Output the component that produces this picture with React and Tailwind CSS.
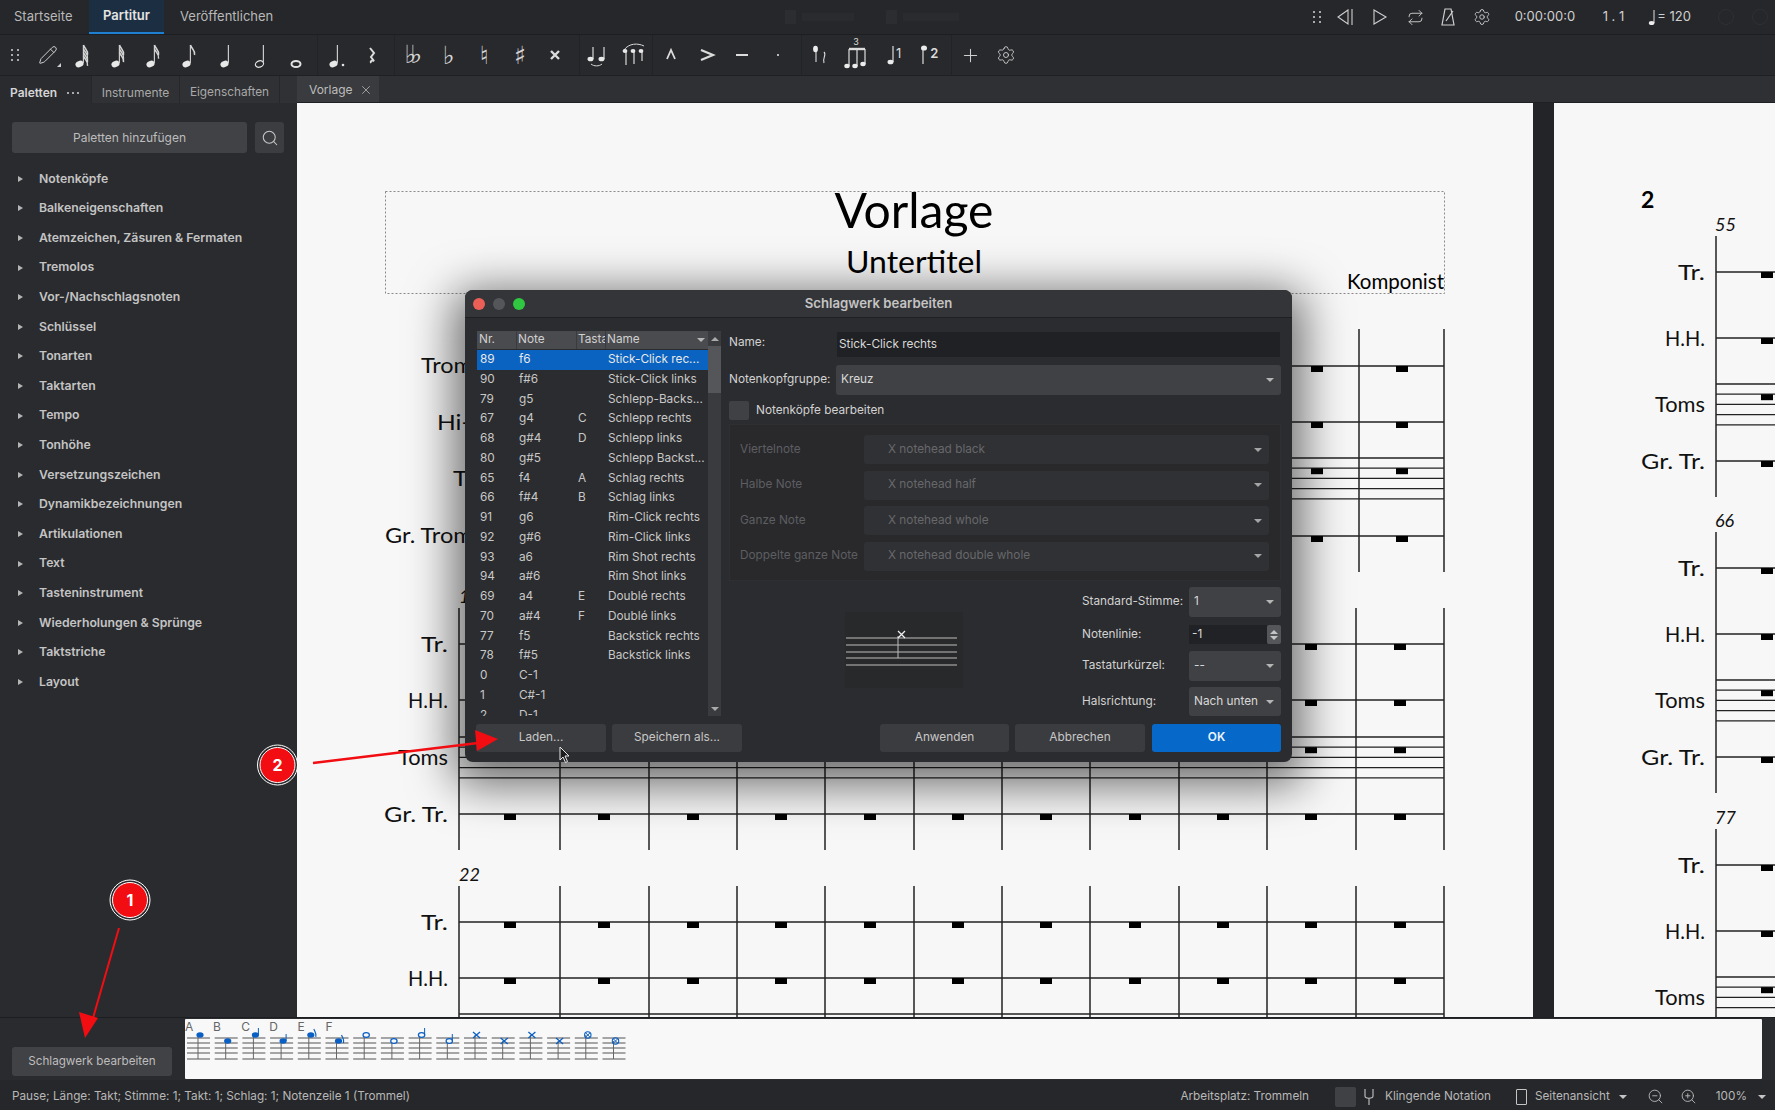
import React from 'react';
import { Search, X, Settings, Plus, ZoomIn, ZoomOut, Pencil, Repeat } from 'lucide-react';

const palettes = [
  'Notenköpfe', 'Balkeneigenschaften', 'Atemzeichen, Zäsuren & Fermaten', 'Tremolos', 'Vor-/Nachschlagsnoten',
  'Schlüssel', 'Tonarten', 'Taktarten', 'Tempo', 'Tonhöhe', 'Versetzungszeichen', 'Dynamikbezeichnungen',
  'Artikulationen', 'Text', 'Tasteninstrument', 'Wiederholungen & Sprünge', 'Taktstriche', 'Layout',
];

const drumRows = [
  ['89', 'f6', '', 'Stick-Click rec...'],
  ['90', 'f#6', '', 'Stick-Click links'],
  ['79', 'g5', '', 'Schlepp-Backs...'],
  ['67', 'g4', 'C', 'Schlepp rechts'],
  ['68', 'g#4', 'D', 'Schlepp links'],
  ['80', 'g#5', '', 'Schlepp Backst...'],
  ['65', 'f4', 'A', 'Schlag rechts'],
  ['66', 'f#4', 'B', 'Schlag links'],
  ['91', 'g6', '', 'Rim-Click rechts'],
  ['92', 'g#6', '', 'Rim-Click links'],
  ['93', 'a6', '', 'Rim Shot rechts'],
  ['94', 'a#6', '', 'Rim Shot links'],
  ['69', 'a4', 'E', 'Doublé rechts'],
  ['70', 'a#4', 'F', 'Doublé links'],
  ['77', 'f5', '', 'Backstick rechts'],
  ['78', 'f#5', '', 'Backstick links'],
  ['0', 'C-1', '', ''],
  ['1', 'C#-1', '', ''],
  ['2', 'D-1', '', ''],
];

const noteheadRows = [
  ['Viertelnote', 'X notehead black'],
  ['Halbe Note', 'X notehead half'],
  ['Ganze Note', 'X notehead whole'],
  ['Doppelte ganze Note', 'X notehead double whole'],
];

const Caret = ({ className = 'border-t-[#b5b5b5]' }) => (
  <span className={`w-0 h-0 border-l-[4px] border-r-[4px] border-t-[4px] border-l-transparent border-r-transparent ${className}`} />
);

// kleine Notensymbole der Werkzeugleiste
const Note = ({ flags = 0, head = 'black', dot = false, className = '' }) => (
  <svg className={className} width="24" height="30" viewBox="0 0 24 30" fill="none">
    {head === 'whole' ? (
      <ellipse cx="12" cy="24" rx="4.5" ry="3" fill="none" stroke="#e2e2e2" strokeWidth="2" />
    ) : (
      <>
        <ellipse cx="8.5" cy="24" rx="4.2" ry="3.1" transform="rotate(-22 8.5 24)"
          fill={head === 'black' ? '#e8e8e8' : 'none'} stroke="#e2e2e2" strokeWidth={head === 'black' ? 0 : 1.2} />
        <path d="M12.4 23V5" stroke="#c9c9c9" strokeWidth="1.2" />
      </>
    )}
    {[...Array(flags)].map((_, i) => (
      <path key={i} d={`M12.5 ${5 + i * 3.6}C13.5 ${9 + i * 3.6} 17.5 ${10 + i * 3.6} 16.5 ${15 + i * 3.6}`} stroke="#d5d5d5" strokeWidth="1.5" />
    ))}
    {dot && <circle cx="18" cy="25" r="1.3" fill="#e2e2e2" />}
  </svg>
);

const Glyph = ({ children, size = 'text-[25px]' }) => (
  <span className={`${size} leading-none text-[#d5d5d5] font-['DejaVu_Sans',sans-serif]`}>{children}</span>
);

const Sym = ({ d, w = 1.8 }) => (
  <svg width="20" height="20" viewBox="0 0 20 20" fill="none" stroke="#dcdcdc" strokeWidth={w}>
    <path d={d} />
  </svg>
);

const Cell = ({ children }) => (
  <div className="w-[35.5px] h-full flex items-center justify-center">{children}</div>
);

const Sep = ({ className = 'ml-[1px]' }) => <div className={`w-px mr-[1px] h-full bg-[#222326] ${className}`} />;

const Dots = () => (
  <svg width="10" height="16" viewBox="0 0 10 16" fill="#a9a9a9">
    {[2, 7, 12].map((y) => (
      <g key={y}>
        <rect x="1" y={y} width="2" height="2" />
        <rect x="7" y={y} width="2" height="2" />
      </g>
    ))}
  </svg>
);

const Toolbar = () => (
  <div className="h-[41px] bg-[#28292c] border-b border-[#1f2023] flex items-center shrink-0">
    <div className="w-[30px] flex justify-center"><Dots /></div>
    <Cell>
      <div className="relative">
        <Pencil size={20} strokeWidth={1.2} className="text-[#cfcfcf]" />
        <span className="absolute -right-[3px] -bottom-[2px] w-0 h-0 border-l-[4px] border-t-[4px] border-l-transparent border-t-transparent border-r-[4px] border-r-[#cfcfcf]" />
      </div>
    </Cell>
    <Cell><Note flags={4} /></Cell>
    <Cell><Note flags={3} /></Cell>
    <Cell><Note flags={2} /></Cell>
    <Cell><Note flags={1} /></Cell>
    <Cell><Note className="ml-[5px]" /></Cell>
    <Cell><Note head="half" className="ml-[4px]" /></Cell>
    <Cell><Note head="whole" /></Cell>
    <Sep className="ml-[3px]" />
    <Cell><Note dot /></Cell>
    <Cell><Sym d="M8 3l4 5-3 4 3 4c-2-1-4 0-3 2" w={2} /></Cell>
    <Sep className="ml-[3.5px]" />
    <Cell><span className="tracking-[-6px] pr-[6px]"><Glyph>♭♭</Glyph></span></Cell>
    <Cell><Glyph>♭</Glyph></Cell>
    <Cell><Glyph>♮</Glyph></Cell>
    <Cell><Glyph>♯</Glyph></Cell>
    <Cell><Sym d="M6 6l8 8M14 6l-8 8" w={2.4} /></Cell>
    <Sep className="ml-[5.5px]" />
    <Cell>
      <svg width="26" height="26" viewBox="0 0 26 26" fill="none" stroke="#d8d8d8">
        <path d="M8 17V5M19 17V5" strokeWidth="1.2" />
        <ellipse cx="5.5" cy="17" rx="3" ry="2.3" fill="#e8e8e8" stroke="none" />
        <ellipse cx="16.5" cy="17" rx="3" ry="2.3" fill="#e8e8e8" stroke="none" />
        <path d="M6 22c3 2.5 8 2.5 11 0" strokeWidth="1" />
      </svg>
    </Cell>
    <Cell>
      <svg width="28" height="28" viewBox="0 0 28 28" fill="none" stroke="#d8d8d8">
        <path d="M4 9c5-7 14-7 20-4" strokeWidth="1" />
        <path d="M6 10v14M14 9v14M22 9v11" strokeWidth="1.2" />
        <ellipse cx="5" cy="10" rx="2.4" ry="2" fill="#e8e8e8" stroke="none" />
        <ellipse cx="13" cy="10" rx="2.4" ry="2" fill="#e8e8e8" stroke="none" />
        <ellipse cx="21" cy="10" rx="2.4" ry="2" fill="#e8e8e8" stroke="none" />
      </svg>
    </Cell>
    <Sep className="ml-0" />
    <Cell><Sym d="M6 14l4-9 4 9" /></Cell>
    <Cell><Sym d="M4 5l12 5-12 5" w={2.2} /></Cell>
    <Cell><Sym d="M4 10h12" w={2} /></Cell>
    <Cell><Sym d="M9.2 10h1.6" w={2} /></Cell>
    <Sep className="ml-[5.5px]" />
    <Cell>
      <svg width="24" height="24" viewBox="0 0 24 24" fill="none" stroke="#dcdcdc">
        <path d="M7 6v13" strokeWidth="1.1" />
        <ellipse cx="6.5" cy="6" rx="2.4" ry="3.2" fill="#ececec" stroke="none" />
        <path d="M15 9c3 3-2 6 0 11" strokeWidth="1.1" />
      </svg>
    </Cell>
    <Cell>
      <div className="relative">
        <svg width="28" height="30" viewBox="0 0 28 30" fill="none" stroke="#dcdcdc">
          <path d="M7 9v17M15 9v17M23 9v15" strokeWidth="1.2" />
          <path d="M7 9h16" strokeWidth="2.4" />
          <ellipse cx="5" cy="26" rx="2.7" ry="2.2" fill="#ececec" stroke="none" />
          <ellipse cx="13" cy="26" rx="2.7" ry="2.2" fill="#ececec" stroke="none" />
          <ellipse cx="21" cy="24" rx="2.7" ry="2.2" fill="#ececec" stroke="none" />
        </svg>
        <span className="absolute left-[11px] -top-[3px] text-[9px] leading-none text-[#dcdcdc]">3</span>
      </div>
    </Cell>
    <div className="w-[2px]" />
    <Cell>
      <div className="flex items-start">
        <svg width="10" height="22" viewBox="0 0 10 22" fill="none" stroke="#dcdcdc"><path d="M7 2v16" strokeWidth="1.2" /><ellipse cx="4.5" cy="18" rx="3" ry="2.3" fill="#ececec" stroke="none" /></svg>
        <span className="text-[13px] leading-[18px] text-[#dcdcdc]">1</span>
      </div>
    </Cell>
    <Cell>
      <div className="flex items-start">
        <svg width="10" height="22" viewBox="0 0 10 22" fill="none" stroke="#dcdcdc"><path d="M3 4v16" strokeWidth="1.2" /><ellipse cx="4" cy="4" rx="3" ry="2.6" fill="#ececec" stroke="none" /></svg>
        <span className="text-[13px] leading-[18px] font-semibold text-[#dcdcdc]">2</span>
      </div>
    </Cell>
    <Sep className="ml-[4px]" />
    <Cell><Plus size={21} strokeWidth={1.2} className="text-[#cfcfcf]" /></Cell>
    <Cell><Settings size={20} strokeWidth={1.1} className="text-[#cfcfcf]" /></Cell>
  </div>
);

const TopBar = () => (
  <div className="h-[35px] bg-[#26272a] border-b border-[#1d1e21] flex items-stretch shrink-0 text-[13px]">
    <div className="w-[89px] flex items-center pl-[14px] text-[#b9b9b9]">Startseite</div>
    <div className="w-[75px] flex items-center justify-center font-semibold text-[#e4e4e4] bg-[#1c2f42] border-b-2 border-[#1f7fd1]">Partitur</div>
    <div className="pl-[16px] flex items-center text-[#b9b9b9]">Veröffentlichen</div>
    <div className="flex items-center ml-[512px] gap-[6px]">
      <span className="w-[11px] h-[14px] bg-[#2c2d31]" />
      <span className="w-[52px] h-[8px] bg-[#2a2b2e]" />
      <span className="w-[11px] h-[14px] ml-[26px] bg-[#2c2d31]" />
      <span className="w-[56px] h-[8px] bg-[#2a2b2e]" />
    </div>
    <div className="flex items-center ml-auto text-[#cfcfcf]">
      <Dots />
      <svg className="ml-[12px]" width="22" height="20" viewBox="0 0 22 20" fill="none" stroke="#cfcfcf" strokeWidth="1.1">
        <path d="M14 3L4 10l10 7zM18 2v16" />
      </svg>
      <svg className="ml-[15px]" width="18" height="20" viewBox="0 0 18 20" fill="none" stroke="#cfcfcf" strokeWidth="1.1">
        <path d="M3 3l12 7-12 7z" />
      </svg>
      <Repeat size={17} strokeWidth={1.3} className="ml-[18px]" />
      <svg className="ml-[15px]" width="18" height="20" viewBox="0 0 18 20" fill="none" stroke="#cfcfcf" strokeWidth="1.2">
        <path d="M6 2h6l3 16H3zM7 14l7-10" />
      </svg>
      <Settings size={18} strokeWidth={1.2} className="ml-[16px]" />
      <span className="ml-[24px] text-[13px] w-[61px] whitespace-nowrap">0:00:00:0</span>
      <span className="ml-[27px] text-[13px]">1 . 1</span>
      <svg className="ml-[24px]" width="8" height="17" viewBox="0 0 8 17" fill="none" stroke="#e0e0e0">
        <path d="M6 1v13" strokeWidth="1" /><ellipse cx="3.6" cy="14" rx="2.8" ry="2.1" fill="#ececec" stroke="none" />
      </svg>
      <span className="ml-[1px] text-[13px]">= 120</span>
      <span className="ml-[27px] w-[16px] h-[16px] rounded-full border border-[#2f3033]" />
      <span className="ml-[18px] mr-[7px] w-[16px] h-[16px] rounded-full border border-[#2f3033]" />
    </div>
  </div>
);

const Sidebar = () => (
  <div className="w-[297px] shrink-0 bg-[#2a2b2e] flex flex-col">
    <div className="h-[27px] flex items-stretch bg-[#26272a] text-[12px] shrink-0">
      <div className="w-[91px] flex items-center pl-[10px] pt-[6px] gap-[10px] bg-[#2a2b2e] font-semibold text-[#d5d5d5]">
        Paletten
        <span className="flex gap-[3px]">
          <i className="w-[2px] h-[2px] bg-[#aaa]" /><i className="w-[2px] h-[2px] bg-[#aaa]" /><i className="w-[2px] h-[2px] bg-[#aaa]" />
        </span>
      </div>
      <div className="w-[87px] ml-px pt-[6px] flex items-center justify-center bg-[#303134] text-[#a9a9a9]">Instrumente</div>
      <div className="w-[99px] ml-px pt-[6px] flex items-center justify-center bg-[#303134] text-[#a9a9a9] text-[11.8px]">Eigenschaften</div>
      <div className="flex-1 ml-px bg-[#303134]" />
    </div>
    <div className="flex gap-[8px] pl-[12px] pt-[19px]">
      <div className="w-[235px] h-[31px] rounded-[3px] bg-[#414245] flex items-center justify-center text-[12px] text-[#bdbdbd]">Paletten hinzufügen</div>
      <div className="w-[29px] h-[31px] rounded-[3px] bg-[#3c3d40] flex items-center justify-center">
        <Search size={18} strokeWidth={1.4} className="text-[#c8c8c8]" />
      </div>
    </div>
    <div className="pt-[11px]">
      {palettes.map((p) => (
        <div key={p} className="h-[29.6px] flex items-center pl-[18px] text-[12.25px] font-semibold text-[#c4c4c4]">
          <span className="w-0 h-0 border-t-[3px] border-b-[3px] border-l-[5px] border-t-transparent border-b-transparent border-l-[#b5b5b5]" />
          <span className="ml-[16px]">{p}</span>
        </div>
      ))}
    </div>
  </div>
);

const LINE = '#222';

// ein Notensystem auf der Seite, alle Werte in Bildschirmkoordinaten
const System = ({ x0, x1, top, tr, hh, toms, gr, bottom, bars, rests, labelX, labels, num, numX }) => {
  const tomsLines = [0, 1, 2, 3, 4].map((i) => toms + i * 10.2);
  const single = [tr, hh, gr];
  return (
    <g>
      {[...single, ...tomsLines].map((y, i) => (
        <line key={i} x1={x0} x2={x1} y1={y} y2={y} stroke={LINE} strokeWidth="1.3" />
      ))}
      {[x0, ...bars].map((x, i) => (
        <line key={i} x1={x} x2={x} y1={top} y2={bottom} stroke={LINE} strokeWidth="1.5" />
      ))}
      {rests.map((x) =>
        [tr, hh, toms + 10.2, gr].map((y) => <rect key={`${x}-${y}`} x={x - 6} y={y} width="12" height="6" fill="#000" />)
      )}
      {labels.filter((l) => l.y < 1017).map((l) => (
        <text key={l.t} x={labelX} y={l.y} textAnchor="end" textLength={l.w} lengthAdjust="spacingAndGlyphs"
          fontFamily="Lato, sans-serif" fontSize="22" fill="#111">{l.t}</text>
      ))}
      {num && (
        <text x={numX} y={top - 5} fontFamily="Lato, sans-serif" fontStyle="italic" fontSize="18" fill="#111">{num}</text>
      )}
    </g>
  );
};

const sysLabels = (tr, hh, toms, gr) => [
  { t: 'Tr.', y: tr + 8, w: 27 },
  { t: 'H.H.', y: hh + 8, w: 40 },
  { t: 'Toms', y: toms + 28, w: 50 },
  { t: 'Gr. Tr.', y: gr + 8, w: 64 },
];

const pageBars = [560, 649, 737, 825, 914, 1002, 1090, 1179, 1267, 1356, 1444];
const pageRests = [510, 604, 693, 781, 870, 958, 1046, 1135, 1223, 1311, 1400];

const PageOne = () => (
  <div className="w-[1236px] bg-[#f7f7f7] shrink-0">
    <svg className="block" width="1236" height="914" viewBox="297 103 1236 914">
      <rect x="385.5" y="191.5" width="1059" height="102" fill="none" stroke="#8a8a8a" strokeWidth="1" strokeDasharray="2 2" />
      <text x="914" y="228" textAnchor="middle" textLength="159" lengthAdjust="spacingAndGlyphs" fontFamily="Lato, sans-serif" fontSize="48" fill="#000">Vorlage</text>
      <text x="914" y="273" textAnchor="middle" textLength="136" lengthAdjust="spacingAndGlyphs" fontFamily="Lato, sans-serif" fontSize="30" fill="#000">Untertitel</text>
      <text x="1444" y="289" textAnchor="end" textLength="97" lengthAdjust="spacingAndGlyphs" fontFamily="Lato, sans-serif" fontSize="22" fill="#000">Komponist</text>
      <System x0={516} x1={1444} top={329} tr={366} hh={422} toms={458} gr={536} bottom={572}
        bars={[1359, 1444]} rests={[1317, 1402]} labelX={510}
        labels={[
          { t: 'Trommel', y: 373, w: 89 },
          { t: 'Hi-Hat', y: 430, w: 73 },
          { t: 'Toms', y: 486, w: 57 },
          { t: 'Gr. Trommel', y: 543, w: 125 },
        ]} />
      <System x0={459} x1={1444} top={608} tr={644} hh={700} toms={737} gr={814} bottom={850}
        bars={pageBars} rests={pageRests} labelX={448} labels={sysLabels(644, 700, 737, 814)} num="12" numX={459} />
      <System x0={459} x1={1444} top={886} tr={922} hh={978} toms={1014} gr={1090} bottom={1126}
        bars={pageBars} rests={pageRests} labelX={448} labels={sysLabels(922, 978, 1014, 1090)} num="22" numX={459} />
    </svg>
  </div>
);

const PageTwo = () => (
  <div className="flex-1 bg-[#f7f7f7]">
    <svg className="block" width="221" height="914" viewBox="1554 103 221 914">
      <text x="1641" y="208" fontFamily="Lato, sans-serif" fontWeight="700" fontSize="23" fill="#000">2</text>
      {[
        { top: 236, num: '55' },
        { top: 532, num: '66' },
        { top: 829, num: '77' },
      ].map((s) => (
        <System key={s.num} x0={1716} x1={1775} top={s.top} tr={s.top + 36} hh={s.top + 102} toms={s.top + 148} gr={s.top + 225}
          bottom={s.top + 261} bars={[]} rests={[1767]} labelX={1705}
          labels={sysLabels(s.top + 36, s.top + 102, s.top + 148, s.top + 225)} num={s.num} numX={1715} />
      ))}
    </svg>
  </div>
);

const DarkSelect = ({ children, className = '' }) => (
  <div className={`bg-[#404144] rounded-[3px] flex items-center justify-between pl-[5px] pr-[7px] text-[#d8d8d8] ${className}`}>
    <span>{children}</span>
    <Caret />
  </div>
);

const Button = ({ children, className = '' }) => (
  <div className={`h-[28px] rounded-[3px] bg-[#3b3c3f] flex items-center justify-center text-[#c8c8c8] ${className}`}>{children}</div>
);

const DrumDialog = () => (
  <div className="absolute left-[465px] top-[290px] w-[827px] h-[472px] rounded-[8px] bg-[#2b2c2f] shadow-[0_12px_45px_12px_rgba(0,0,0,0.55)] overflow-hidden flex flex-col text-[11.8px]">
    <div className="h-[28px] shrink-0 bg-[#343538] border-b border-[#1e1f21] flex items-center relative">
      <div className="flex gap-[8px] pl-[8px]">
        <span className="w-[12px] h-[12px] rounded-full bg-[#ec5f56]" />
        <span className="w-[12px] h-[12px] rounded-full bg-[#55565a]" />
        <span className="w-[12px] h-[12px] rounded-full bg-[#2fc840]" />
      </div>
      <span className="absolute inset-x-0 text-center text-[13.2px] font-semibold text-[#c4c4c4]">Schlagwerk bearbeiten</span>
    </div>

    <div className="flex h-[386px] pl-[12px] pr-[11px] pt-[1px] mt-[12px] gap-[8px]">
      <div className="w-[244px] h-[385px] flex shrink-0 overflow-hidden">
        <div className="w-[231px]">
          <div className="h-[18px] flex items-center bg-[#4a4b4e] text-[#d0d0d0]">
            <span className="w-[40px] pl-[2px] border-r border-[#3a3b3e]">Nr.</span>
            <span className="w-[60px] pl-[1px] border-r border-[#3a3b3e]">Note</span>
            <span className="w-[29px] pl-[1px] overflow-hidden whitespace-nowrap border-r border-[#3a3b3e]">Tastatur</span>
            <span className="flex-1 pl-[1px] flex items-center justify-between pr-[3px]">Name <Caret /></span>
          </div>
          <div className="pt-[1px]">
            {drumRows.map((r, i) => (
              <div key={r[0]} className={`h-[19.75px] flex items-center ${i === 0 ? 'bg-[#0a63c0] text-[#e8e8e8]' : 'text-[#c8c8c8]'}`}>
                <span className="w-[42px] pl-[3px]">{r[0]}</span>
                <span className="w-[59px]">{r[1]}</span>
                <span className="w-[30px]">{r[2]}</span>
                <span className="flex-1 whitespace-nowrap">{r[3]}</span>
              </div>
            ))}
          </div>
        </div>
        <div className="w-[13px] bg-[#3a3b3e] flex flex-col items-center justify-between">
          <div className="w-full flex flex-col items-center">
            <span className="h-[15px] flex items-center"><Caret className="border-t-[#aaa] rotate-180" /></span>
            <span className="w-full h-[47px] bg-[#55565a]" />
          </div>
          <span className="h-[15px] flex items-center"><Caret className="border-t-[#aaa]" /></span>
        </div>
      </div>

      <div className="flex-1 flex flex-col">
        <div className="flex items-start pt-[1px]">
          <span className="w-[108px] pt-[2px] text-[#d2d2d2]">Name:</span>
          <div className="w-[443px] h-[25px] bg-[#202124] flex items-center text-[#d8d8d8] pl-[2px]">Stick-Click rechts</div>
        </div>
        <div className="flex items-center mt-[8px]">
          <span className="w-[107px] text-[#d2d2d2]">Notenkopfgruppe:</span>
          <DarkSelect className="w-[445px] h-[30px]">Kreuz</DarkSelect>
        </div>
        <div className="flex items-center mt-[6px]">
          <span className="w-[20px] h-[19px] bg-[#404144] rounded-[2px]" />
          <span className="ml-[7px] text-[#d2d2d2]">Notenköpfe bearbeiten</span>
        </div>
        <div className="mt-[4px] h-[157px] bg-[#29292c] border border-[#2e2f32] pt-[10px] pl-[10px] pr-[11px] flex flex-col gap-[6.5px]">
          {noteheadRows.map(([label, value]) => (
            <div key={label} className="flex items-center h-[29px] text-[#5d5e61]">
              <span className="w-[124px] whitespace-nowrap">{label}</span>
              <div className="flex-1 h-full bg-[#303134] rounded-[3px] flex items-center justify-between pl-[24px] pr-[7px] text-[#67686b]">
                <span>{value}</span>
                <Caret className="border-t-[#a5a5a5]" />
              </div>
            </div>
          ))}
        </div>
        <div className="flex mt-[6px] justify-between">
          <div className="ml-[116px] mt-[25px] w-[118px] h-[76px] bg-[#28292b]">
            <svg className="block" width="118" height="76" viewBox="0 0 118 76" fill="none">
              {[26, 33, 40, 46, 53].map((y) => (
                <line key={y} x1="1" x2="112" y1={y} y2={y} stroke="#bdbdbd" strokeWidth="1.2" />
              ))}
              <path d="M53 24v22" stroke="#bdbdbd" strokeWidth="1" />
              <path d="M53 19l7 7M60 19l-7 7" stroke="#efefef" strokeWidth="1.3" />
            </svg>
          </div>
          <div className="w-[199px] text-[#d2d2d2]">
            <div className="flex items-center">
              <span className="w-[107px] whitespace-nowrap">Standard-Stimme:</span>
              <DarkSelect className="w-[92px] h-[30px]">1</DarkSelect>
            </div>
            <div className="flex items-center mt-[8px]">
              <span className="w-[107px]">Notenlinie:</span>
              <div className="w-[78px] h-[19px] bg-[#212225] flex items-center pl-[3px] text-[#d8d8d8]">-1</div>
              <div className="w-[14px] h-[19px] bg-[#55565a] rounded-[2px] flex flex-col items-center justify-center gap-[2px]">
                <Caret className="border-t-[#c5c5c5] rotate-180" />
                <Caret className="border-t-[#c5c5c5]" />
              </div>
            </div>
            <div className="flex items-center mt-[7px]">
              <span className="w-[107px]">Tastaturkürzel:</span>
              <DarkSelect className="w-[92px] h-[30px]">--</DarkSelect>
            </div>
            <div className="flex items-center mt-[6px]">
              <span className="w-[107px]">Halsrichtung:</span>
              <DarkSelect className="w-[92px] h-[29px]">Nach unten</DarkSelect>
            </div>
          </div>
        </div>
      </div>
    </div>

    <div className="flex pl-[11px] pr-[11px] mt-[8px]">
      <Button className="w-[130px]">Laden...</Button>
      <Button className="w-[130px] ml-[6px]">Speichern als...</Button>
      <Button className="w-[129px] ml-auto">Anwenden</Button>
      <Button className="w-[130px] ml-[6px]">Abbrechen</Button>
      <Button className="w-[129px] ml-[7px] !bg-[#0669c9] !text-[#eef4fb] font-semibold">OK</Button>
    </div>
  </div>
);

const BLUE = '#0a5fc4';

// Schlagwerk-Palette unten: 16 kleine Systeme mit blauen Köpfen
const drumCells = [
  { kind: 'black', y: 1035 }, { kind: 'black', y: 1041 }, { kind: 'black', y: 1035, up: true }, { kind: 'black', y: 1041, up: true },
  { kind: 'flag', y: 1035 }, { kind: 'flag', y: 1041 }, { kind: 'half', y: 1035 }, { kind: 'half', y: 1041 },
  { kind: 'half', y: 1035, up: true }, { kind: 'half', y: 1041, up: true }, { kind: 'x', y: 1035 }, { kind: 'x', y: 1041 },
  { kind: 'x', y: 1035 }, { kind: 'x', y: 1041 }, { kind: 'cx', y: 1035 }, { kind: 'cx', y: 1041 },
];

const DrumPalette = () => (
  <div className="flex-1 h-[60px] bg-[#f8f8f8] mr-[13px] rounded-[1px] relative">
    <svg className="block" width="1577" height="60" viewBox="185 1019 1577 60" fill="none">
      {drumCells.map((c, i) => {
        const x = 187 + i * 27.7;
        const cx = x + 12;
        return (
          <g key={i}>
            {[1038, 1043, 1048, 1053, 1059].map((y) => (
              <line key={y} x1={x} x2={x + 23} y1={y} y2={y} stroke="#777" strokeWidth="1.3" />
            ))}
            <line x1={cx - 1} x2={cx - 1} y1={c.y} y2={1059} stroke="#666" strokeWidth="1" />
            {c.kind === 'black' && <ellipse cx={cx + 1} cy={c.y} rx="3.6" ry="2.8" fill={BLUE} />}
            {c.kind === 'flag' && (
              <>
                <ellipse cx={cx + 1} cy={c.y} rx="3.6" ry="2.8" fill={BLUE} />
                <path d={`M${cx + 4} ${c.y - 6}c1 3 3 4 2 8`} stroke={BLUE} strokeWidth="1.1" />
              </>
            )}
            {c.kind === 'half' && <ellipse cx={cx + 1} cy={c.y} rx="3.2" ry="2.4" stroke={BLUE} strokeWidth="1.2" fill="#f8f8f8" />}
            {c.kind === 'x' && <path d={`M${cx - 3} ${c.y - 3}l7 6M${cx + 4} ${c.y - 3}l-7 6`} stroke={BLUE} strokeWidth="1.3" />}
            {c.kind === 'cx' && (
              <>
                <circle cx={cx + 1} cy={c.y} r="3.2" stroke={BLUE} strokeWidth="1.1" />
                <path d={`M${cx - 1} ${c.y - 2}l4 4M${cx + 3} ${c.y - 2}l-4 4`} stroke={BLUE} strokeWidth="1" />
              </>
            )}
            {c.up && <path d={`M${cx + 4} ${c.y}v-7`} stroke={BLUE} strokeWidth="1" />}
          </g>
        );
      })}
      {['A', 'B', 'C', 'D', 'E', 'F'].map((l, i) => (
        <text key={l} x={185 + i * 28.1} y="1031" fontFamily="Inter, sans-serif" fontSize="12" fill="#666">{l}</text>
      ))}
    </svg>
  </div>
);

const StatusBar = () => (
  <div className="h-[30px] pt-[3px] bg-[#26272a] flex items-center text-[11.75px] text-[#b8b8b8] shrink-0">
    <span className="pl-[12px]">Pause; Länge: Takt; Stimme: 1; Takt: 1; Schlag: 1; Notenzeile 1 (Trommel)</span>
    <span className="ml-auto">Arbeitsplatz: Trommeln</span>
    <span className="ml-[26px] w-[21px] h-[20px] bg-[#404144] rounded-[2px]" />
    <svg className="ml-[8px]" width="10" height="18" viewBox="0 0 10 18" fill="none" stroke="#c5c5c5" strokeWidth="1.1">
      <path d="M1 1v7c0 3 8 3 8 0V1M5 10v7" />
    </svg>
    <span className="ml-[11px]">Klingende Notation</span>
    <span className="ml-[25px] w-[11px] h-[16px] border border-[#c5c5c5] rounded-[1px]" />
    <span className="ml-[8px]">Seitenansicht</span>
    <span className="ml-[9px] flex items-center"><Caret className="border-t-[#c5c5c5]" /></span>
    <ZoomOut size={17} strokeWidth={1.3} className="ml-[20px]" />
    <ZoomIn size={17} strokeWidth={1.3} className="ml-[16px]" />
    <span className="ml-[19px]">100%</span>
    <span className="ml-[11px] mr-[9px] flex items-center"><Caret className="border-t-[#c5c5c5]" /></span>
  </div>
);

const Annotations = () => (
  <svg className="absolute inset-0 pointer-events-none" width="1775" height="1110" viewBox="0 0 1775 1110" fill="none">
    <circle cx="130" cy="900" r="20" stroke="#fff" strokeWidth="1" />
    <circle cx="130" cy="900" r="17.5" fill="#f20d12" stroke="#fff" strokeWidth="1" />
    <text x="130" y="906" textAnchor="middle" fontFamily="Inter, sans-serif" fontWeight="700" fontSize="16" fill="#fff">1</text>
    <path d="M119 928L93 1018" stroke="#f20d12" strokeWidth="2" />
    <path d="M85 1038L79 1012 98 1018z" fill="#f20d12" />

    <circle cx="277.500" cy="765" r="20" stroke="#fff" strokeWidth="1" />
    <circle cx="277.500" cy="765" r="17.5" fill="#f20d12" stroke="#fff" strokeWidth="1" />
    <text x="277.500" y="771" textAnchor="middle" fontFamily="Inter, sans-serif" fontWeight="700" fontSize="16" fill="#fff">2</text>
    <path d="M313 763L478 743" stroke="#f20d12" strokeWidth="2.500" />
    <path d="M498 739L475 730 477 751z" fill="#f20d12" />

    <path d="M560 747v13l3-3 2.500 5.500 2-1-2.500-5.500h4z" fill="#1c1c1c" stroke="#e8e8e8" strokeWidth="1" />
  </svg>
);

const App = () => (
  <div className="relative w-[1775px] h-[1110px] overflow-hidden bg-[#2a2b2e] flex flex-col font-['Inter','Liberation_Sans',sans-serif]">
    <TopBar />
    <Toolbar />
    <div className="flex h-[941px] shrink-0">
      <Sidebar />
      <div className="flex-1 flex flex-col bg-[#232428] min-w-0">
        <div className="h-[27px] bg-[#2f3033] flex shrink-0 border-b border-[#1f2023]">
          <div className="w-[82px] bg-[#3a3b3e] flex items-center pt-[2px] text-[12px] text-[#bdbdbd] pl-[12px]">
            Vorlage
            <X size={14} strokeWidth={1.3} className="ml-[6px]" />
          </div>
        </div>
        <div className="flex gap-[21px] flex-1 overflow-hidden">
          <PageOne />
          <PageTwo />
        </div>
      </div>
    </div>
    <div className="h-[63px] bg-[#2a2b2e] border-t border-[#1d1e21] flex items-center shrink-0">
      <div className="w-[185px] pl-[12px] pt-[25px]">
        <div className="w-[160px] h-[29px] rounded-[3px] bg-[#414245] flex items-center justify-center text-[11.7px] text-[#bdbdbd]">Schlagwerk bearbeiten</div>
      </div>
      <DrumPalette />
    </div>
    <StatusBar />
    <DrumDialog />
    <Annotations />
  </div>
);

export default App;
